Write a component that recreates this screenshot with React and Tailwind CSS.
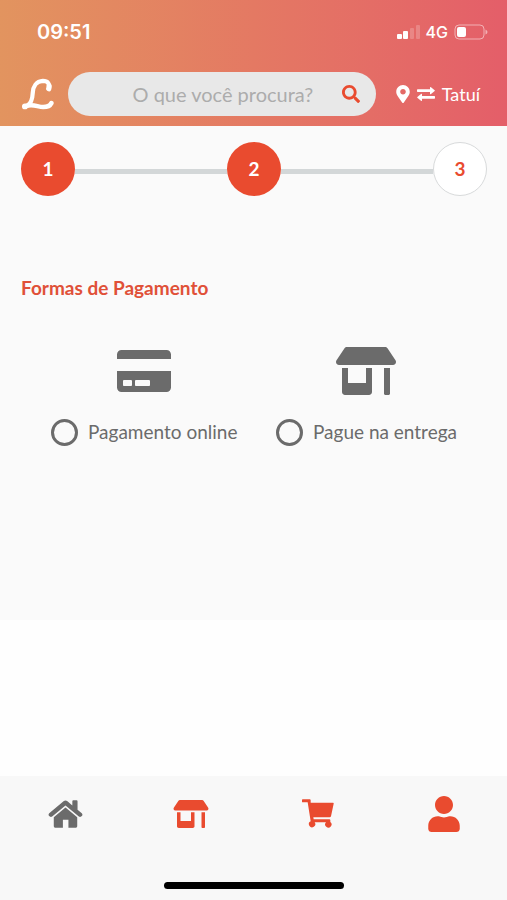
import React, { useState } from 'react';
import { FaSearch, FaMapMarkerAlt, FaCreditCard, FaStoreAlt, FaUser } from 'react-icons/fa';

const Logo = () => (
  <svg viewBox="0 0 98 96" className="w-8 h-8" fill="none" stroke="white" strokeLinecap="round" strokeLinejoin="round" aria-hidden="true">
    <path strokeWidth="13" d="M82 31 C86 17 79 8 64 8 C43 9 34 26 33 44 C32 64 28 78 16 84" />
    <path strokeWidth="16" d="M82 32 C83 30 83 27 83 24" />
    <path strokeWidth="14" d="M9 86 C33 76 47 88 65 88 C78 88 86 84 90 76" />
    <circle cx="9" cy="86" r="2" fill="white" strokeWidth="14" />
  </svg>
);

const ExchangeIcon = () => (
  <svg viewBox="0 0 54 42" className="w-[18px] h-[14px]" fill="currentColor" aria-hidden="true">
    <path d="M2 7h37V2q0-3 3-1l11 9q1 1 0 2l-11 9q-3 2-3-1v-5H2q-2 0-2-2V9q0-2 2-2z" />
    <path d="M52 35H15v5q0 3-3 1L1 32q-1-1 0-2l11-9q3-2 3 1v5h37q2 0 2 2v4q0 2-2 2z" />
  </svg>
);

const HomeIcon = () => (
  <svg viewBox="0 0 106 86" className="w-[35px] h-7" fill="currentColor" aria-hidden="true">
    <path d="M3 41 L47 4 Q53 -1 59 4 L74 17 V4 Q74 1 77 1 H87 Q90 1 90 4 V30 L103 41 Q107 45 103 49 L101 51 Q98 54 94 51 L53 17 L12 51 Q8 54 5 51 L3 49 Q-1 45 3 41 Z" />
    <path d="M53 23 L89 53 V81 Q89 85 85 85 H62 V61 H45 V85 H21 Q17 85 17 81 V53 Z" />
  </svg>
);

const CartIcon = () => (
  <svg viewBox="0 0 96 90" className="w-8 h-[30px]" fill="currentColor" aria-hidden="true">
    <path d="M2 1H23Q26 1 26 4V11H93Q96 11 95 14L87 52Q86 55 83 55H34L35 61H82Q85 61 85 64V69A9.500 9.500 0 1 1 72 70H38A9.500 9.500 0 1 1 26 67L17 10H2Q0 10 0 8V3Q0 1 2 1Z" />
  </svg>
);

const SignalIcon = () => (
  <svg viewBox="0 0 24 16" className="w-6 h-4" fill="white" aria-hidden="true">
    <rect x="1" y="10" width="5" height="5" rx="1" />
    <rect x="7" y="7" width="5" height="8" rx="1" />
    <rect x="14" y="4" width="4" height="11" rx="1" opacity="0.2" />
    <rect x="20" y="1" width="4" height="14" rx="1" opacity="0.2" />
  </svg>
);

const BatteryIcon = () => (
  <svg viewBox="0 0 34 16" className="w-[34px] h-4" aria-hidden="true">
    <rect x="1" y="1" width="29" height="14" rx="4" fill="none" stroke="white" strokeOpacity="0.5" />
    <rect x="3" y="3" width="9" height="10" rx="2" fill="white" />
    <path d="M31.500 5.500v5q2-1 2-2.500t-2-2.500z" fill="white" opacity="0.5" />
  </svg>
);

const steps = [
  { number: 1, done: true },
  { number: 2, done: true },
  { number: 3, done: false },
];

const paymentOptions = [
  { id: 'online', label: 'Pagamento online', icon: <FaCreditCard className="w-[54px] h-12" /> },
  { id: 'entrega', label: 'Pague na entrega', icon: <FaStoreAlt className="w-[60px] h-12" /> },
];

const navItems = [
  { label: 'Início', icon: <HomeIcon />, color: 'text-[#6b6b6b]' },
  { label: 'Lojas', icon: <FaStoreAlt className="w-9 h-7" />, color: 'text-[#e94b2f]' },
  { label: 'Carrinho', icon: <CartIcon />, color: 'text-[#e94b2f]' },
  { label: 'Perfil', icon: <FaUser className="w-8 h-9" />, color: 'text-[#e94b2f]' },
];

const Header = () => {
  const [search, setSearch] = useState('');

  return (
    <header className="bg-linear-to-r from-[#e2945f] via-[#e47963] to-[#e45e69] pt-5 pb-[10px] text-white">
      <div className="flex items-center justify-between h-6 pl-[37px] pr-[19px] font-['Inter',sans-serif]">
        <span className="text-xl font-semibold">09:51</span>
        <div className="flex items-center gap-[6px]">
          <SignalIcon />
          <span className="text-base font-medium">4G</span>
          <BatteryIcon />
        </div>
      </div>

      <div className="flex items-center mt-7 pl-[22px] pr-[27px]">
        <a href="#" aria-label="Página inicial">
          <Logo />
        </a>
        <form onSubmit={(e) => e.preventDefault()} className="flex flex-1 min-w-0 items-center h-11 ml-[14px] mr-5 pl-12 pr-4 rounded-full bg-[#e8e8e8]">
          <input
            type="text"
            aria-label="Buscar"
            placeholder="O que você procura?"
            value={search}
            onChange={(e) => setSearch(e.target.value)}
            className="flex-1 min-w-0 text-center text-xl text-[#6b6b6b] placeholder:text-[#acacac] outline-none"
          />
          <button type="submit" aria-label="Pesquisar" className="ml-3 text-[#e94b2f]">
            <FaSearch className="w-[18px] h-[18px]" />
          </button>
        </form>
        <button type="button" className="flex items-center gap-[7px] text-lg">
          <FaMapMarkerAlt className="w-[14px] h-[18px]" />
          <ExchangeIcon />
          <span>Tatuí</span>
        </button>
      </div>
    </header>
  );
};

const Stepper = () => (
  <ol className="flex items-center">
    {steps.map((step, index) => (
      <React.Fragment key={step.number}>
        {index > 0 && <li aria-hidden="true" className="flex-1 h-[5px] mt-1 bg-[#d3d7d8]" />}
        <li
          className={`flex items-center justify-center w-[54px] h-[54px] rounded-full text-[19px] font-bold ${
            step.done ? 'bg-[#e94b2f] text-white' : 'bg-white border border-[#d8dadb] text-[#e94b2f]'
          }`}
        >
          {step.number}
        </li>
      </React.Fragment>
    ))}
  </ol>
);

const App = () => {
  const [payment, setPayment] = useState('');

  return (
    <div className="flex flex-col min-h-screen bg-[#fefefe] font-['Lato',sans-serif]">
      <Header />

      <main className="pl-[21px] pr-5 pt-4 pb-[173px] bg-[#fafafa]">
        <Stepper />

        <fieldset className="mt-20">
          <legend className="text-[19px] leading-6 font-bold text-[#e05038]">Formas de Pagamento</legend>
          <div className="flex justify-between mt-[47px] px-[30px] text-[#6b6b6b]">
            {paymentOptions.map((option) => (
              <label key={option.id} htmlFor={option.id} className="flex flex-col items-center gap-[23px]">
                {option.icon}
                <span className="flex items-center gap-[10px] text-[19px]">
                  <input
                    type="radio"
                    id={option.id}
                    name="pagamento"
                    value={option.id}
                    checked={payment === option.id}
                    onChange={(e) => setPayment(e.target.value)}
                    className="appearance-none w-[27px] h-[27px] rounded-full border-3 border-[#6b6b6b] checked:bg-[#e94b2f]"
                  />
                  {option.label}
                </span>
              </label>
            ))}
          </div>
        </fieldset>
      </main>

      <nav className="mt-auto pt-5 pb-[11px] bg-[#f8f8f8]">
        <div className="grid grid-cols-4 pl-0.5">
          {navItems.map((item) => (
            <a key={item.label} href="#" aria-label={item.label} className={`flex items-center justify-center h-9 ${item.color}`}>
              {item.icon}
            </a>
          ))}
        </div>
        <div className="w-[180px] h-[7px] mx-auto mt-[50px] rounded-full bg-black" />
      </nav>
    </div>
  );
};

export default App;
